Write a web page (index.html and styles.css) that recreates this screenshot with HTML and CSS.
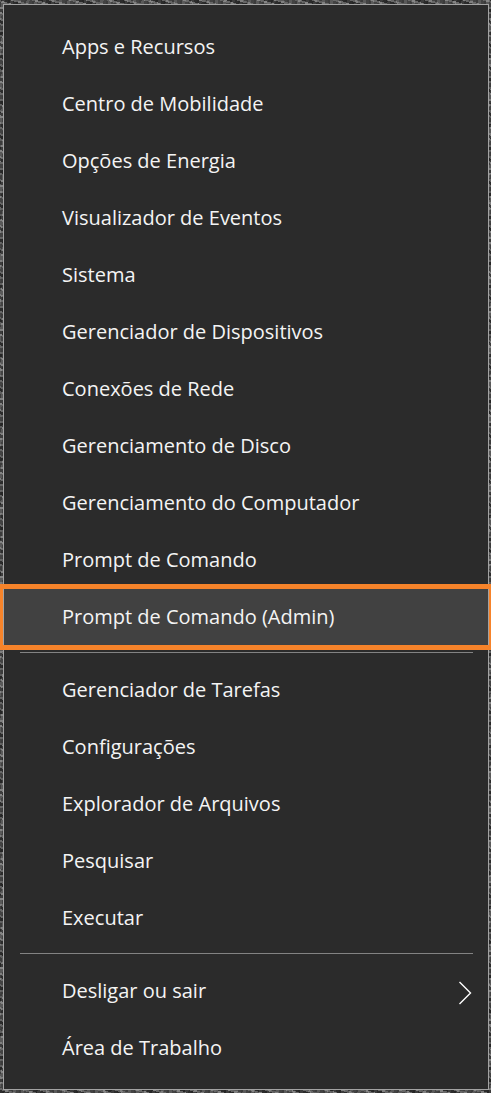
FILE: index.html
```html
<!DOCTYPE html>
<html lang="pt-BR">
<head>
<meta charset="utf-8">
<title>Menu</title>
<link rel="stylesheet" href="styles.css">
</head>
<body>
<div class="menu">
  <div class="group">
    <div class="item">Apps e Recursos</div>
    <div class="item">Centro de Mobilidade</div>
    <div class="item">Opções de Energia</div>
    <div class="item">Visualizador de Eventos</div>
    <div class="item">Sistema</div>
    <div class="item">Gerenciador de Dispositivos</div>
    <div class="item">Conexões de Rede</div>
    <div class="item">Gerenciamento de Disco</div>
    <div class="item">Gerenciamento do Computador</div>
    <div class="item">Prompt de Comando</div>
    <div class="item active">Prompt de Comando (Admin)<span class="mark"></span></div>
  </div>
  <div class="sep"></div>
  <div class="group">
    <div class="item">Gerenciador de Tarefas</div>
    <div class="item">Configurações</div>
    <div class="item">Explorador de Arquivos</div>
    <div class="item">Pesquisar</div>
    <div class="item">Executar</div>
  </div>
  <div class="sep"></div>
  <div class="group">
    <div class="item sub">Desligar ou sair
      <svg class="chev" width="14" height="24" viewBox="0 0 14 24"><path d="M1.5 1 L12.5 12 L1.5 23" fill="none" stroke="#ffffff" stroke-width="1.4"/></svg>
    </div>
    <div class="item">Área de Trabalho</div>
  </div>
</div>
</body>
</html>
```

FILE: styles.css
```css
html, body {
  margin: 0;
  padding: 0;
}
body {
  width: 491px;
  height: 1093px;
  overflow: hidden;
  background-color: #5a5a5a;
  background-image:
    repeating-linear-gradient(17deg, rgba(20,20,20,0.55) 0 3px, rgba(160,160,160,0.35) 3px 5px, rgba(60,60,60,0.4) 5px 9px, rgba(200,200,200,0.25) 9px 11px),
    repeating-linear-gradient(103deg, rgba(0,0,0,0.35) 0 2px, rgba(255,255,255,0.12) 2px 5px, rgba(0,0,0,0.2) 5px 8px);
  font-family: "Open Sans", "Noto Sans", sans-serif;
}
.menu {
  box-sizing: border-box;
  position: relative;
  margin: 4px 0 0 3px;
  width: 486px;
  height: 1086px;
  background: #2b2b2b;
  border: 1px solid #a3a3a3;
  padding: 14px 0 12px 0;
  display: flex;
  flex-direction: column;
}
.group {
  display: flex;
  flex-direction: column;
}
.item {
  box-sizing: border-box;
  height: 57px;
  display: flex;
  align-items: center;
  justify-content: space-between;
  padding: 0 16px 2px 58px;
  color: #f4f4f4;
  font-size: 20px;
  position: relative;
}
.item.active {
  background: #414141;
}
.mark {
  position: absolute;
  left: -6px;
  right: -6px;
  top: -5px;
  bottom: -4px;
  border: 5px solid #f6832a;
  pointer-events: none;
}
.sep {
  height: 1px;
  background: #838383;
  margin: 6px 15px 9px 16px;
}
.chev {
  display: block;
  margin-top: 4px;
}
```
